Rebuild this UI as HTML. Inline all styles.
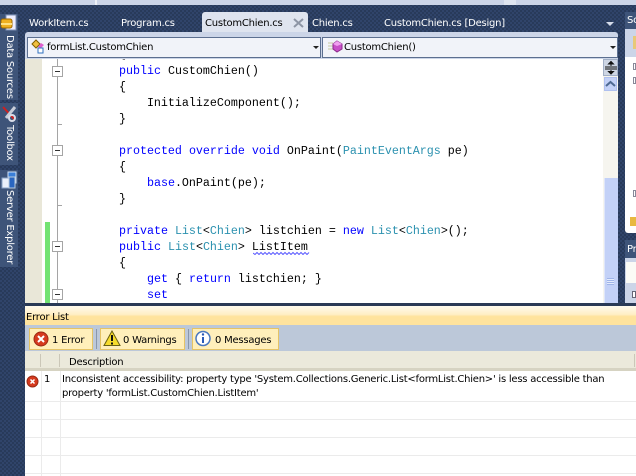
<!DOCTYPE html>
<html><head><meta charset="utf-8"><style>
html,body{margin:0;padding:0;width:636px;height:476px;overflow:hidden}
#r{position:relative;width:636px;height:476px;overflow:hidden;background:#2c3e60 repeating-conic-gradient(#283a5a 0 25%,#30446a 0 50%) 0 0/4px 4px;font-family:"DejaVu Sans",sans-serif;font-size:10px}
#r div,#r svg{position:absolute}
.t{white-space:pre;line-height:14px;font-size:10px;letter-spacing:-.235px;color:#000}
.w{color:#fff}
.c{font-family:"Liberation Mono",monospace;font-size:11.67px;line-height:16px;white-space:pre;color:#000;left:63px}
.k{color:#0000ff}.y{color:#2b91af}
.m{left:52px;width:9px;height:9px;border:1px solid #a5a5a5;background:#fff}
.m:after{content:"";position:absolute;left:2px;top:4px;width:5px;height:1px;background:#333}
.v{color:#fff;writing-mode:vertical-rl;white-space:pre;left:3px;line-height:13px;font-size:10px;letter-spacing:-.235px}
.btn{top:328px;height:22px;background:#ffefbb;border:1px solid #e5c365;box-sizing:border-box}
.h{background:#ebebeb}
</style></head><body><div id="r">

<div style="left:0;top:0;width:636px;height:5px;background:#ccd5e8"></div>
<div style="left:95px;top:0;width:2px;height:5px;background:#eef1f7"></div>
<div style="left:504px;top:0;width:12px;height:5px;background:#dfe5f0"></div>

<div style="left:0;top:14px;width:18px;height:86px;background:#3e5479"></div>
<div style="left:0;top:103px;width:18px;height:62px;background:#3e5479"></div>
<div style="left:0;top:170px;width:18px;height:97px;background:#3e5479"></div>
<div class="v" style="top:35px">Data Sources</div>
<div class="v" style="top:125px">Toolbox</div>
<div class="v" style="top:190px">Server Explorer</div>
<svg style="left:0;top:14px" width="17" height="20"><rect x="6" y="1" width="10" height="15" fill="#eef" stroke="#7d90b5"/><rect x="1" y="5" width="11" height="9" rx="2" fill="#f0b020" stroke="#a06a00"/><rect x="1" y="9" width="11" height="2" fill="#ffe080"/></svg>
<svg style="left:1px;top:105px" width="16" height="18"><path d="M2 2L14 15" stroke="#d02020" stroke-width="2"/><path d="M14 2L5 13" stroke="#c8ccd8" stroke-width="3"/><circle cx="11" cy="13" r="3" fill="none" stroke="#d8dce8" stroke-width="2"/></svg>
<svg style="left:1px;top:171px" width="16" height="18"><rect x="7" y="1" width="8" height="11" fill="#3b7fd8" stroke="#cfe0f5"/><rect x="1" y="7" width="7" height="10" fill="#eaf0fa" stroke="#8ba3c8"/><rect x="8" y="6" width="6" height="11" fill="#2a66c0" stroke="#bcd"/></svg>

<div class="t w" style="left:29px;top:17px">WorkItem.cs</div>
<div class="t w" style="left:121px;top:17px">Program.cs</div>
<div style="left:202px;top:12px;width:106px;height:22px;background:#dfe4ef;border-radius:3px 3px 0 0"></div>
<div class="t" style="left:205px;top:17px">CustomChien.cs</div>
<svg style="left:292px;top:17px" width="14" height="12"><path d="M2 2L11 10M11 2L2 10" stroke="#8d95a5" stroke-width="2"/></svg>
<div class="t w" style="left:312px;top:17px">Chien.cs</div>
<div class="t w" style="left:384px;top:17px">CustomChien.cs [Design]</div>
<svg style="left:604px;top:20px" width="12" height="8"><path d="M2 2H10L6 6Z" fill="#d5dcea"/></svg>

<div style="left:25px;top:32px;width:593px;height:27px;background:#ccd5e8;border-radius:3px 3px 0 0"></div>
<div style="left:27px;top:37px;width:294px;height:21px;background:#f1f3f9;border:1px solid #5c6f90;box-sizing:border-box"></div>
<div style="left:322px;top:37px;width:296px;height:21px;background:#f1f3f9;border:1px solid #5c6f90;box-sizing:border-box"></div>
<svg style="left:31px;top:39px" width="16" height="16"><path d="M1 5L5 1L9 5L5 9Z" fill="#f0c040" stroke="#806000"/><path d="M7 8L10 4L13 6L10 9Z" fill="#e060d0"/><rect x="7" y="9" width="5" height="5" fill="#fff" stroke="#3070c0"/></svg>
<div class="t" style="left:47px;top:41px">formList.CustomChien</div>
<svg style="left:312px;top:45px" width="8" height="5"><path d="M1 1H7L4 4Z" fill="#222"/></svg>
<svg style="left:327px;top:40px" width="16" height="14"><path d="M1 3H6M1 6H6M1 9H6" stroke="#c8c8a0"/><path d="M10 1L15 4V9L10 12L6 9V4Z" fill="#c850c8" stroke="#8a2a8a"/><path d="M6 4L10 6L15 4L10 1Z" fill="#f0a0f0"/></svg>
<div class="t" style="left:344px;top:41px">CustomChien()</div>
<svg style="left:609px;top:45px" width="8" height="5"><path d="M1 1H7L4 4Z" fill="#222"/></svg>

<div style="left:25px;top:59px;width:593px;height:244px;background:#fff"></div>
<div style="left:25px;top:59px;width:17px;height:244px;background:#e9e7d8"></div>
<div style="left:45px;top:222px;width:5px;height:81px;background:#73e373"></div>
<div style="left:57px;top:59px;width:1px;height:244px;background:#a5a5a5"></div>
<div style="left:58px;top:124px;width:4px;height:1px;background:#a5a5a5"></div>
<div style="left:58px;top:205px;width:4px;height:1px;background:#a5a5a5"></div>
<div class="m" style="top:66px"></div>
<div class="m" style="top:145px"></div>
<div class="m" style="top:241px"></div>
<div class="m" style="top:289px"></div>

<div style="left:42px;top:59px;width:562px;height:244px;overflow:hidden">
<div class="c" style="left:21px;top:-13px">        {</div>
</div>
<div class="c" style="top:63px">        <span class="k">public</span> CustomChien()</div>
<div class="c" style="top:79px">        {</div>
<div class="c" style="top:95px">            InitializeComponent();</div>
<div class="c" style="top:111px">        }</div>
<div class="c" style="top:143px">        <span class="k">protected</span> <span class="k">override</span> <span class="k">void</span> OnPaint(<span class="y">PaintEventArgs</span> pe)</div>
<div class="c" style="top:159px">        {</div>
<div class="c" style="top:175px">            <span class="k">base</span>.OnPaint(pe);</div>
<div class="c" style="top:191px">        }</div>
<div class="c" style="top:223px">        <span class="k">private</span> <span class="y">List</span>&lt;<span class="y">Chien</span>&gt; listchien = <span class="k">new</span> <span class="y">List</span>&lt;<span class="y">Chien</span>&gt;();</div>
<div class="c" style="top:239px">        <span class="k">public</span> <span class="y">List</span>&lt;<span class="y">Chien</span>&gt; ListItem</div>
<div class="c" style="top:255px">        {</div>
<div class="c" style="top:271px">            <span class="k">get</span> { <span class="k">return</span> listchien; }</div>
<div class="c" style="top:287px">            <span class="k">set</span></div>
<svg style="left:253px;top:251px" width="57" height="4"><path d="M0 2L2 3.5L4 1.5L6 3.5L8 1.5L10 3.5L12 1.5L14 3.5L16 1.5L18 3.5L20 1.5L22 3.5L24 1.5L26 3.5L28 1.5L30 3.5L32 1.5L34 3.5L36 1.5L38 3.5L40 1.5L42 3.5L44 1.5L46 3.5L48 1.5L50 3.5L52 1.5L54 3.5L56 1.5" fill="none" stroke="#5a5aff" stroke-width="1"/></svg>

<div style="left:603px;top:59px;width:15px;height:244px;background:#f6f5ef"></div>
<div style="left:603px;top:59px;width:15px;height:17px;background:#ced6e4;border:1px solid #a3b0c6;box-sizing:border-box"></div>
<svg style="left:604px;top:60px" width="14" height="15"><path d="M1 7H13M1 9H13" stroke="#111"/><path d="M7 1V6M7 10V14M4.5 4L7 1.5L9.5 4ZM4.5 11.5L7 14L9.5 11.5Z" stroke="#111" fill="#111"/></svg>
<div style="left:604px;top:77px;width:13px;height:14px;background:#c3d1f7;border:1px solid #afc0ef;box-sizing:border-box"></div>
<svg style="left:605px;top:80px" width="11" height="8"><path d="M1 6L5.5 2L10 6" fill="none" stroke="#4e6a92" stroke-width="2"/></svg>
<div style="left:604px;top:178px;width:14px;height:125px;background:#c3d1f7;border-left:1px solid #dfe6fa;box-sizing:border-box"></div>
<div style="left:607px;top:278px;width:7px;height:7px;background:repeating-linear-gradient(#9fb4e8 0 1px,#e4ebfc 1px 2px)"></div>

<div style="left:625px;top:12px;width:11px;height:17px;background:#3e5479"></div>
<div class="t w" style="left:627px;top:14px">So</div>
<div style="left:625px;top:29px;width:11px;height:204px;background:#fff;border-radius:0 0 0 3px"></div>
<div style="left:625px;top:29px;width:11px;height:28px;background:#ccd5e8"></div>
<div style="left:633px;top:36px;width:3px;height:13px;background:#e8c878"></div>
<div style="left:633px;top:63px;width:3px;height:7px;background:#fff;border:1px solid #889;box-sizing:border-box"></div>
<div style="left:633px;top:77px;width:3px;height:7px;background:#fff;border:1px solid #889;box-sizing:border-box"></div>
<div style="left:633px;top:190px;width:3px;height:7px;background:#fff;border:1px solid #889;box-sizing:border-box"></div>
<div style="left:630px;top:217px;width:6px;height:9px;background:#e8b840"></div>
<div style="left:625px;top:240px;width:11px;height:18px;background:#3e5479"></div>
<div class="t w" style="left:627px;top:243px">Pr</div>
<div style="left:625px;top:258px;width:11px;height:45px;background:#ccd5e8"></div>
<div style="left:626px;top:262px;width:10px;height:21px;background:#fbfbf6"></div>
<div style="left:632px;top:291px;width:4px;height:7px;background:#fff;border:1px solid #667;box-sizing:border-box"></div>

<div style="left:25px;top:303px;width:611px;height:3px;background:#2a3a56"></div>
<div style="left:25px;top:306px;width:611px;height:19px;background:linear-gradient(#fffbee 0,#ffeec4 45%,#ffe39d 55%,#ffe39d 100%)"></div>
<div class="t" style="left:26px;top:311px">Error List</div>
<div style="left:25px;top:325px;width:611px;height:26px;background:#bcc8d9"></div>
<div class="btn" style="left:29px;width:64px"></div>
<div class="btn" style="left:100px;width:85px"></div>
<div class="btn" style="left:192px;width:87px"></div>
<div style="left:96px;top:329px;width:1px;height:20px;background:#8a97ab"></div>
<div style="left:188px;top:329px;width:1px;height:20px;background:#8a97ab"></div>
<svg style="left:33px;top:331px" width="16" height="16"><circle cx="8" cy="8" r="7" fill="#d63a1e" stroke="#9a2a14"/><path d="M5 5L11 11M11 5L5 11" stroke="#fff" stroke-width="2"/></svg>
<div class="t" style="left:52px;top:334px">1 Error</div>
<svg style="left:103px;top:330px" width="18" height="17"><path d="M9 1L17 15.5H1Z" fill="#f7dc2c" stroke="#6a6010"/><path d="M9 5V11M9 12.5V14.5" stroke="#111" stroke-width="2"/></svg>
<div class="t" style="left:123px;top:334px">0 Warnings</div>
<svg style="left:195px;top:330px" width="16" height="17"><circle cx="8" cy="8.5" r="7" fill="#fff" stroke="#4a78c0" stroke-width="1.5"/><path d="M8 7V13" stroke="#2a5ab8" stroke-width="2"/><circle cx="8" cy="4.5" r="1.2" fill="#2a5ab8"/></svg>
<div class="t" style="left:215px;top:334px">0 Messages</div>

<div style="left:25px;top:351px;width:611px;height:17px;background:#ebe9db"></div>
<div style="left:25px;top:368px;width:611px;height:3px;background:#d6d3c2"></div>
<div style="left:40px;top:354px;width:1px;height:13px;background:#cbc7b8"></div>
<div style="left:59px;top:354px;width:1px;height:13px;background:#cbc7b8"></div>
<div style="left:634px;top:354px;width:1px;height:13px;background:#cbc7b8"></div>
<div class="t" style="left:69px;top:356px">Description</div>

<div style="left:25px;top:371px;width:611px;height:105px;background:#fff"></div>
<div class="h" style="left:41px;top:371px;width:1px;height:105px"></div>
<div class="h" style="left:60px;top:371px;width:1px;height:105px"></div>
<div class="h" style="left:25px;top:401px;width:611px;height:1px"></div>
<div class="h" style="left:25px;top:419px;width:611px;height:1px"></div>
<div class="h" style="left:25px;top:437px;width:611px;height:1px"></div>
<div class="h" style="left:25px;top:455px;width:611px;height:1px"></div>
<div class="h" style="left:25px;top:473px;width:611px;height:1px"></div>
<svg style="left:26px;top:375px" width="13" height="13"><circle cx="6.5" cy="6.5" r="5.5" fill="#d63a1e" stroke="#9a2a14"/><path d="M4.5 4.5L8.500 8.500M8.500 4.500L4.500 8.500" stroke="#fff" stroke-width="1.5"/></svg>
<div class="t" style="left:44px;top:373px">1</div>
<div class="t" style="left:62px;top:373px">Inconsistent accessibility: property type 'System.Collections.Generic.List&lt;formList.Chien&gt;' is less accessible than</div>
<div class="t" style="left:62px;top:387px">property 'formList.CustomChien.ListItem'</div>
</div></body></html>
